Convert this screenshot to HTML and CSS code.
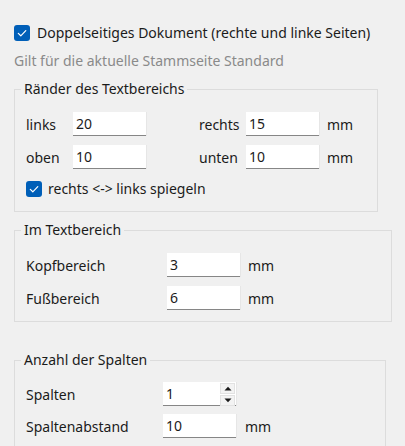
FILE: index.html
```html
<!DOCTYPE html>
<html lang="de">
<head>
<meta charset="utf-8">
<link rel="stylesheet" href="styles.css">
</head>
<body>
<div class="page">
  <label class="check top-check">
    <span class="box"><svg viewBox="0 0 16 16" width="16" height="16"><path d="M4.3 8.4 L6.8 10.8 L11.8 5.6" fill="none" stroke="#fff" stroke-width="1.2" stroke-linecap="round" stroke-linejoin="round"/></svg></span>
    <span>Doppelseitiges Dokument (rechte und linke Seiten)</span>
  </label>
  <div class="hint">Gilt für die aktuelle Stammseite Standard</div>

  <fieldset class="group g1">
    <legend>Ränder des Textbereichs</legend>
    <div class="inner">
      <div class="margins">
        <span class="lbl">links</span><span class="field">20</span>
        <span class="lbl second">rechts</span><span class="field">15</span><span class="unit">mm</span>
        <span class="lbl">oben</span><span class="field">10</span>
        <span class="lbl second">unten</span><span class="field">10</span><span class="unit">mm</span>
      </div>
      <label class="check mirror">
        <span class="box"><svg viewBox="0 0 16 16" width="16" height="16"><path d="M4.3 8.4 L6.8 10.8 L11.8 5.6" fill="none" stroke="#fff" stroke-width="1.2" stroke-linecap="round" stroke-linejoin="round"/></svg></span>
        <span>rechts &lt;-&gt; links spiegeln</span>
      </label>
    </div>
  </fieldset>

  <fieldset class="group g2">
    <legend>Im Textbereich</legend>
    <div class="inner">
      <div class="rows rows2">
        <span class="lbl">Kopfbereich</span><span class="field">3</span><span class="unit">mm</span>
        <span class="lbl">Fußbereich</span><span class="field">6</span><span class="unit">mm</span>
      </div>
    </div>
  </fieldset>

  <fieldset class="group g3">
    <legend>Anzahl der Spalten</legend>
    <div class="inner">
      <div class="rows rows3">
        <span class="lbl">Spalten</span>
        <span class="field spin">1
          <span class="spinner">
            <span class="sbtn"><svg viewBox="0 0 8 5" width="8" height="5"><path d="M0.5 4.5 L4 0.8 L7.5 4.5 Z" fill="#1a1a1a"/></svg></span>
            <span class="sbtn"><svg viewBox="0 0 8 5" width="8" height="5"><path d="M0.5 0.5 L4 4.2 L7.5 0.5 Z" fill="#1a1a1a"/></svg></span>
          </span>
        </span>
        <span class="unit"></span>
        <span class="lbl">Spaltenabstand</span><span class="field">10</span><span class="unit">mm</span>
      </div>
    </div>
  </fieldset>
</div>
</body>
</html>
```

FILE: styles.css
```css
html, body {
  margin: 0;
  padding: 0;
  background: #f0f0f0;
}
body {
  font-family: "Noto Sans", "Open Sans", sans-serif;
  font-size: 14px;
  color: #1b1b1b;
  width: 405px;
  height: 446px;
  overflow: hidden;
}
.page {
  padding: 23px 0 0 14px;
}
.check {
  display: flex;
  align-items: center;
  gap: 7px;
  height: 20px;
  line-height: 20px;
}
.box {
  width: 16px;
  height: 16px;
  border-radius: 3px;
  background: #005fb8;
  display: flex;
  flex: none;
}
.box svg { display: block; }
.hint {
  margin-top: 8px;
  height: 20px;
  line-height: 20px;
  color: #8a8a8a;
}
.group {
  display: block;
  margin: 8px 0 0 0;
  padding: 0;
  border: 1px solid #dcdcdc;
  box-sizing: border-box;
  min-width: 0;
}
.group legend {
  margin-left: 6px;
  padding: 0 3px;
  height: 20px;
  line-height: 20px;
}
.g1 { width: 364px; }
.g2 { width: 378px; margin-top: 8px; }
.g3 { width: 372px; margin-top: 28px; height: 96px; border-bottom: 0; }
.inner {
  padding: 3px 0 0 11px;
}
.margins {
  display: grid;
  grid-template-columns: 47px 73px 53px 47px 73px auto;
  grid-auto-rows: 24px;
  row-gap: 9px;
  align-items: center;
  padding-top: 10px;
}
.margins .second { grid-column: 4; }
.rows {
  display: grid;
  grid-auto-rows: 24px;
  row-gap: 9px;
  align-items: center;
  padding-top: 10px;
}
.rows2 { grid-template-columns: 141px 73px auto; padding-bottom: 11px; }
.rows3 { grid-template-columns: 137px 73px auto; row-gap: 8px; padding-top: 9px; }
.field {
  height: 24px;
  background: #fff;
  border-bottom: 1px solid #868686;
  box-shadow: 1px 0 0 #e6e6e6;
  box-sizing: border-box;
  padding: 0 3px;
  line-height: 23px;
  position: relative;
}
.unit {
  padding-left: 8px;
}
.rows3 .unit { padding-left: 9px; }
.mirror {
  margin-top: 10px;
  gap: 6px;
  margin-bottom: 12px;
}
.spinner {
  position: absolute;
  right: 1px;
  top: 1px;
  width: 15px;
  display: flex;
  flex-direction: column;
  gap: 1px;
}
.sbtn {
  background: #f3f3f3;
  border: 1px solid #e2e2e2;
  box-sizing: border-box;
  display: flex;
  align-items: center;
  justify-content: center;
  height: 11px;
}
.sbtn svg { display: block; }
```
